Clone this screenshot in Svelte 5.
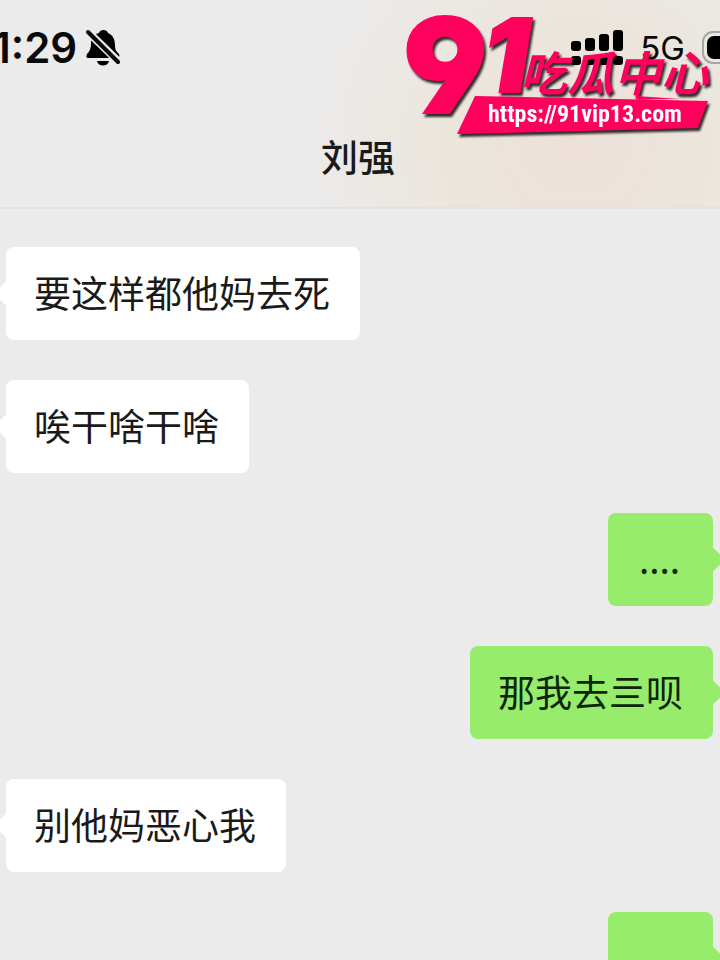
<script lang="ts">
  type Message = { id: number; mine: boolean; text: string };

  const contact = '刘强';

  const messages: Message[] = [
    { id: 1, mine: false, text: '要这样都他妈去死' },
    { id: 2, mine: false, text: '唉干啥干啥' },
    { id: 3, mine: true, text: '....' },
    { id: 4, mine: true, text: '那我去亖呗' },
    { id: 5, mine: false, text: '别他妈恶心我' },
    { id: 6, mine: true, text: '....' }
  ];
</script>

<div class="screen">
  <header class="header">
    <div class="status">
      <div class="status-left">
        <span class="time">1:29</span>
        <svg class="bell" width="34" height="38" viewBox="0 0 34 38" aria-label="Silent">
          <path d="M13 4c1-4 8-4 9 0 5 2 7 7 7 12 0 6 2 7 4 9 1 2 0 4-1 4H2c-2 0-2-2-1-4 3-3 4-6 4-11C5 9 8 5 13 4z" />
          <path d="M11 32h12c-1 6-11 6-12 0z" />
          <path class="gap" d="M0 1l34 33" />
          <path class="slash" d="M2 3l30 30" />
        </svg>
      </div>
      <div class="status-right">
        <svg class="signal" width="52" height="36" viewBox="0 0 52 36" aria-label="Signal">
          <rect x="0" y="11" width="10" height="10" rx="3" />
          <rect x="14" y="8" width="10" height="13" rx="3" />
          <rect x="28" y="4" width="10" height="17" rx="3" />
          <rect x="42" y="0" width="10" height="21" rx="3" />
          <rect x="0" y="26" width="10" height="9" rx="3" />
          <rect x="14" y="26" width="10" height="9" rx="3" />
          <rect x="28" y="26" width="10" height="9" rx="3" />
          <rect x="42" y="26" width="10" height="9" rx="3" />
        </svg>
        <span class="network">5G</span>
        <svg class="battery" width="64" height="34" viewBox="0 0 64 34" aria-label="Battery">
          <rect class="case" x="1" y="1" width="60" height="31" rx="10" />
          <rect x="5" y="5" width="52" height="23" rx="7" />
        </svg>
      </div>
    </div>
    <h1 class="title">{contact}</h1>
  </header>

  <main class="chat">
    {#each messages as message (message.id)}
      <div class="bubble" class:mine={message.mine}>{message.text}</div>
    {/each}
  </main>

  <svg class="brand" width="320" height="144" viewBox="0 0 320 144">
    <text class="nine" x="3" y="113">9</text>
    <text class="one" x="83" y="92">1</text>
    <text class="name" x="120" y="91">吃瓜中心</text>
    <path d="M236 96l44 3h-44z" />
    <path d="M75 96L308 101 298 128 57 134z" />
    <text class="link" x="88" y="122">https://91vip13.com</text>
  </svg>
</div>

<style>
  :global(body) {
    margin: 0;
    background: #ebebeb;
  }

  .screen {
    position: relative;
    display: flex;
    flex-direction: column;
    height: 100vh;
    overflow: hidden;
    background: #ebebeb;
    color: #1a1a1a;
    font-family: 'Noto Sans CJK SC', sans-serif;
  }

  .header {
    flex: none;
    border-bottom: 2px solid #e2e2e1;
    background:
      radial-gradient(ellipse 270px 250px at 80% 70%, #ece0d8 0%, #ebe6dd 50%, rgba(235, 235, 235, 0) 100%),
      #ebebeb;
  }

  .status {
    display: flex;
    justify-content: space-between;
    height: 96px;
    color: #0a0a0a;
  }

  .status-left,
  .status-right {
    display: flex;
    align-items: center;
  }

  .status-left {
    gap: 9px;
    margin-left: -7px;
  }

  .status-right {
    gap: 17px;
    margin-right: -46px;
  }

  .time {
    font: 600 42px/48px Inter, sans-serif;
  }

  .network {
    font: 400 33px/36px Inter, sans-serif;
  }

  .bell .gap {
    stroke: #ebebeb;
    stroke-width: 8;
  }

  .bell .slash {
    stroke: #0a0a0a;
    stroke-width: 4;
    stroke-linecap: round;
  }

  .battery .case {
    fill: none;
    stroke: #a5a5a1;
    stroke-width: 2;
  }

  .title {
    margin: 0;
    padding: 36px 4px 27px 0;
    font-size: 37px;
    font-weight: 500;
    line-height: 48px;
    text-align: center;
  }

  .chat {
    display: flex;
    flex: none;
    flex-direction: column;
    align-items: flex-start;
    gap: 40px;
    padding: 38px 7px 38px 6px;
  }

  .bubble {
    position: relative;
    box-sizing: border-box;
    min-width: 105px;
    padding: 21px 30px 24px 28px;
    border-radius: 8px;
    background: #fff;
    font-size: 37px;
    line-height: 48px;
    text-align: center;
  }

  .bubble::before {
    content: '';
    position: absolute;
    top: 37px;
    left: -8px;
    width: 19px;
    height: 19px;
    border-radius: 3px;
    background: inherit;
    transform: rotate(45deg);
  }

  .bubble.mine {
    align-self: flex-end;
    background: #98ec6b;
    color: #0c260a;
  }

  .bubble.mine::before {
    right: -8px;
    left: auto;
  }

  .brand {
    position: absolute;
    top: 0;
    right: 0;
    overflow: visible;
    fill: #ff005c;
    filter: drop-shadow(2px 3px 1px rgba(0, 0, 0, 0.8));
  }

  .nine,
  .one {
    stroke: #ff005c;
    stroke-width: 2;
    font-family: Inter, sans-serif;
    font-weight: 900;
  }

  .nine {
    font-size: 132px;
    font-feature-settings: 'ss01', 'cv04';
  }

  .one {
    font-size: 102px;
    font-style: italic;
  }

  .name {
    font-size: 47px;
    font-style: italic;
    font-weight: 700;
  }

  .link {
    fill: #fff;
    font: 700 24px 'Roboto Condensed', 'Liberation Sans Narrow', sans-serif;
  }
</style>
